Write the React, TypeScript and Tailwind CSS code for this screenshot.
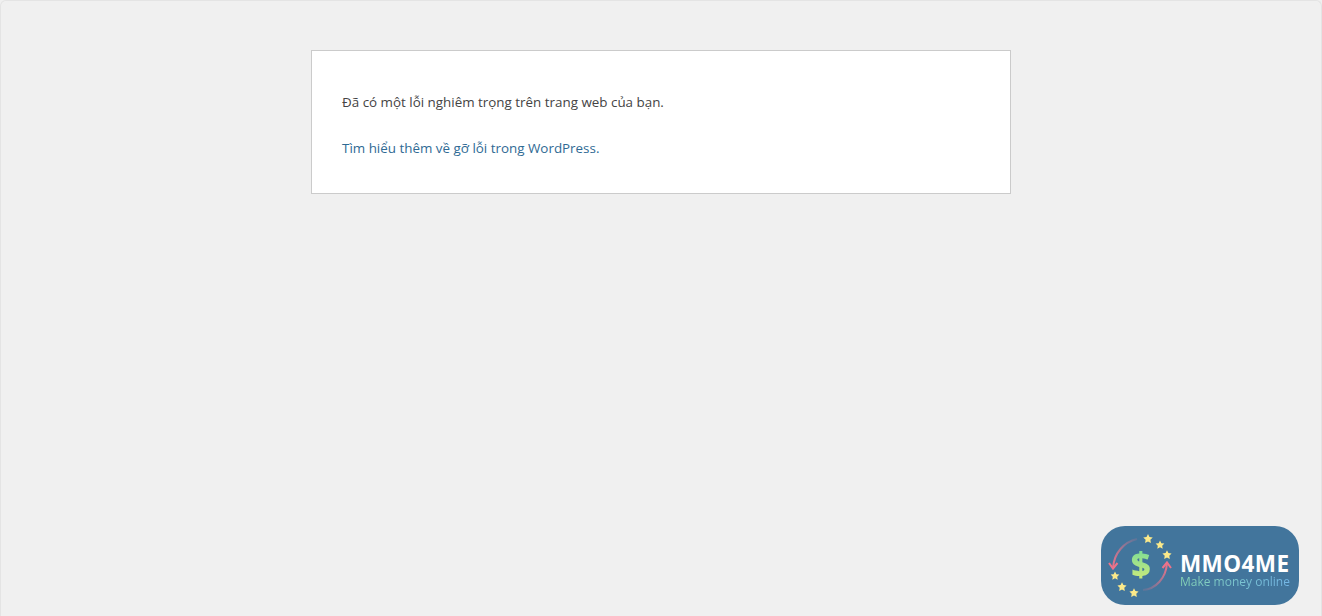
import React from "react";

const stars = [
    { x: 47, y: 13, r: 5 },
    { x: 59, y: 19, r: 4.6 },
    { x: 66, y: 29, r: 4.8 },
    { x: 14, y: 50, r: 4.6 },
    { x: 21, y: 61, r: 4.8 },
    { x: 33, y: 67, r: 4.8 },
];

function starPoints(cx: number, cy: number, r: number) {
    const pts: string[] = [];
    for (let i = 0; i < 10; i++) {
        const radius = i % 2 === 0 ? r : r * 0.5;
        const a = (Math.PI / 5) * i - Math.PI / 2;
        pts.push(`${(cx + radius * Math.cos(a)).toFixed(2)},${(cy + radius * Math.sin(a)).toFixed(2)}`);
    }
    return pts.join(" ");
}

function LogoMark() {
    return (
        <svg width="78" height="79" viewBox="0 0 78 79" className="shrink-0">
            <defs>
                <linearGradient id="arcLeft" x1="1" y1="0" x2="0" y2="1">
                    <stop offset="0%" stopColor="#e8768a" stopOpacity={0.15} />
                    <stop offset="100%" stopColor="#ee7289" />
                </linearGradient>
                <linearGradient id="arcRight" x1="0" y1="1" x2="1" y2="0">
                    <stop offset="0%" stopColor="#e8768a" stopOpacity={0.15} />
                    <stop offset="100%" stopColor="#ee7289" />
                </linearGradient>
            </defs>
            <path d="M36 13 C23 16 13 27 12 42" fill="none" stroke="url(#arcLeft)" strokeWidth="2" />
            <path d="M8 37 L12 42.5 L16.5 37" fill="none" stroke="#ee7289" strokeWidth="2" />
            <path d="M42 64 C55 63 65 52 66 37" fill="none" stroke="url(#arcRight)" strokeWidth="2" />
            <path d="M61.5 42 L66 36.5 L70 42" fill="none" stroke="#ee7289" strokeWidth="2" />
            {stars.map((st) => (
                <polygon key={`${st.x}-${st.y}`} points={starPoints(st.x, st.y, st.r)} fill="#fbe98a" />
            ))}
        </svg>
    );
}

export default function App() {
    return (
        <div className="relative h-[616px] w-[1322px] overflow-hidden bg-[#f0f0f0] font-['Open_Sans','Noto_Sans',sans-serif]">
            {/* faint window edge */}
            <div className="absolute inset-0 rounded-t-[6px] border border-b-0 border-[#e4e4e4]"></div>

            <div className="relative mx-auto mt-[50px] flex h-[144px] w-[700px] flex-col gap-[25px] border border-[#cbcbcb] bg-white px-[30px] pt-[41px] text-[13.4px] leading-[21px]">
                <p className="text-[#444444]">Đã có một lỗi nghiêm trọng trên trang web của bạn.</p>
                <p>
                    <a href="#" className="text-[#2f6a94]">Tìm hiểu thêm về gỡ lỗi trong WordPress.</a>
                </p>
            </div>

            {/* Watermark badge */}
            <div className="absolute left-[1101px] top-[526px] flex h-[79px] w-[198px] items-center overflow-hidden rounded-[24px] bg-[#42759c]">
                <div className="relative h-[79px] w-[79px] shrink-0">
                    <LogoMark />
                    <span className="absolute left-[30px] top-[16px] bg-gradient-to-b from-[#5fd89a] to-[#d9ee72] bg-clip-text text-[34px] font-extrabold leading-[44px] text-transparent">
                        $
                    </span>
                </div>
                <div className="flex flex-col pt-[11px]">
                    <span className="text-[22.5px] font-bold leading-[22px] tracking-[0.4px] text-white">MMO4ME</span>
                    <span className="bg-gradient-to-r from-[#86d4b4] to-[#74b6e6] bg-clip-text text-[12px] leading-[14px] text-transparent">
                        Make money online
                    </span>
                </div>
            </div>
        </div>
    );
}
